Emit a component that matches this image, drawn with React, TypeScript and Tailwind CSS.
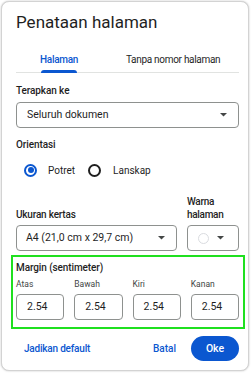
import React from "react";

const Caret = () => (
  <svg width="7" height="4" viewBox="0 0 7 4" className="block">
    <path d="M0 0 L7 0 L3.5 3.5 Z" fill="#444746" />
  </svg>
);

export default function App() {
  const font = { fontFamily: "Roboto, 'Noto Sans', sans-serif" };
  return (
    <div className="w-[252px] h-[373px] bg-white overflow-hidden" style={font}>
      <div className="ml-[1px] mt-[1px] w-[248px] h-[370px] rounded-[8px] border border-[#d3d3d3] bg-white pl-[14px] pr-[9px] text-[#1f1f1f] shadow-[0_0_2px_rgba(0,0,0,0.25)]">
        <div className="pt-[8px] h-[32px] text-[17px] leading-[24px] text-[#1f1f1f] whitespace-nowrap">Penataan halaman</div>

        <div className="mt-[12px] flex h-[27px] border-b border-[#e1e3e1] whitespace-nowrap">
          <div className="relative px-[24px] flex items-center text-[10px] tracking-[-0.3px] font-medium text-[#0b57d0]">
            Halaman
            <div className="absolute left-[25px] right-[25px] bottom-[-1px] h-[3px] rounded-t-[3px] bg-[#0b57d0]" />
          </div>
          <div className="px-[24px] flex items-center text-[10px] tracking-[-0.3px] text-[#1f1f1f]">Tanpa nomor halaman</div>
        </div>

        <div className="mt-[10px] text-[10px] tracking-[-0.1px] leading-[16px] font-medium">Terapkan ke</div>
        <div className="mt-[3px] h-[26px] rounded-[4px] border border-[#8e918f] flex items-center justify-between pl-[10px] pr-[11px]">
          <span className="text-[10.5px]">Seluruh dokumen</span>
          <Caret />
        </div>

        <div className="mt-[9px] text-[10px] tracking-[-0.1px] leading-[16px] font-medium">Orientasi</div>
        <div className="mt-[5px] h-[24px] flex items-center text-[10px]">
          <div className="ml-[8px] w-[13px] h-[13px] rounded-full border-2 border-[#0b57d0] flex items-center justify-center">
            <div className="w-[6px] h-[6px] rounded-full bg-[#0b57d0]" />
          </div>
          <span className="ml-[11px]">Potret</span>
          <div className="ml-[13px] w-[13px] h-[13px] rounded-full border-2 border-[#1f1f1f]" />
          <span className="ml-[12px]">Lanskap</span>
        </div>

        <div className="mt-[13px] flex items-end">
          <div className="w-[161px] text-[10px] tracking-[-0.2px] leading-[13px] font-medium">Ukuran kertas</div>
          <div className="ml-[10px] text-[10px] tracking-[-0.3px] leading-[13px] font-medium">
            Warna
            <br />
            halaman
          </div>
        </div>
        <div className="mt-[4px] flex">
          <div className="w-[161px] h-[26px] rounded-[4px] border border-[#8e918f] flex items-center justify-between pl-[9px] pr-[11px]">
            <span className="text-[10.5px] whitespace-nowrap">A4 (21,0 cm x 29,7 cm)</span>
            <Caret />
          </div>
          <div className="ml-[10px] w-[52px] h-[26px] rounded-[4px] border border-[#8e918f] flex items-center pl-[10px]">
            <div className="w-[11px] h-[11px] rounded-full border border-[#dadce0] bg-white" />
            <div className="ml-[8px]">
              <Caret />
            </div>
          </div>
        </div>

        <div className="mt-[4px] ml-[-5px] mr-[-6px] pl-[3px] pr-[4px] border-2 border-[#1fe01f] pt-[3px] pb-[7px]">
          <div className="text-[10px] tracking-[-0.1px] leading-[16px] font-medium">Margin (sentimeter)</div>
          <div className="mt-[1px] grid grid-cols-4 gap-x-[10px]">
            {["Atas", "Bawah", "Kiri", "Kanan"].map((l) => (
              <div key={l}>
                <div className="text-[8.5px] leading-[14px] text-[#444746]">{l}</div>
                <div className="mt-[3px] h-[26px] rounded-[4px] border border-[#8e918f] flex items-center pl-[10px] text-[10.5px]">
                  2.54
                </div>
              </div>
            ))}
          </div>
        </div>

        <div className="mt-[7px] flex items-center justify-between">
          <span className="ml-[8px] text-[10px] tracking-[-0.2px] font-medium text-[#0b57d0]">Jadikan default</span>
          <div className="flex items-center">
            <span className="text-[10px] font-medium text-[#0b57d0] mr-[15px]">Batal</span>
            <div className="w-[48px] h-[25px] rounded-full bg-[#0b57d0] flex items-center justify-center text-[10.5px] font-medium text-white">
              Oke
            </div>
          </div>
        </div>
      </div>
    </div>
  );
}
